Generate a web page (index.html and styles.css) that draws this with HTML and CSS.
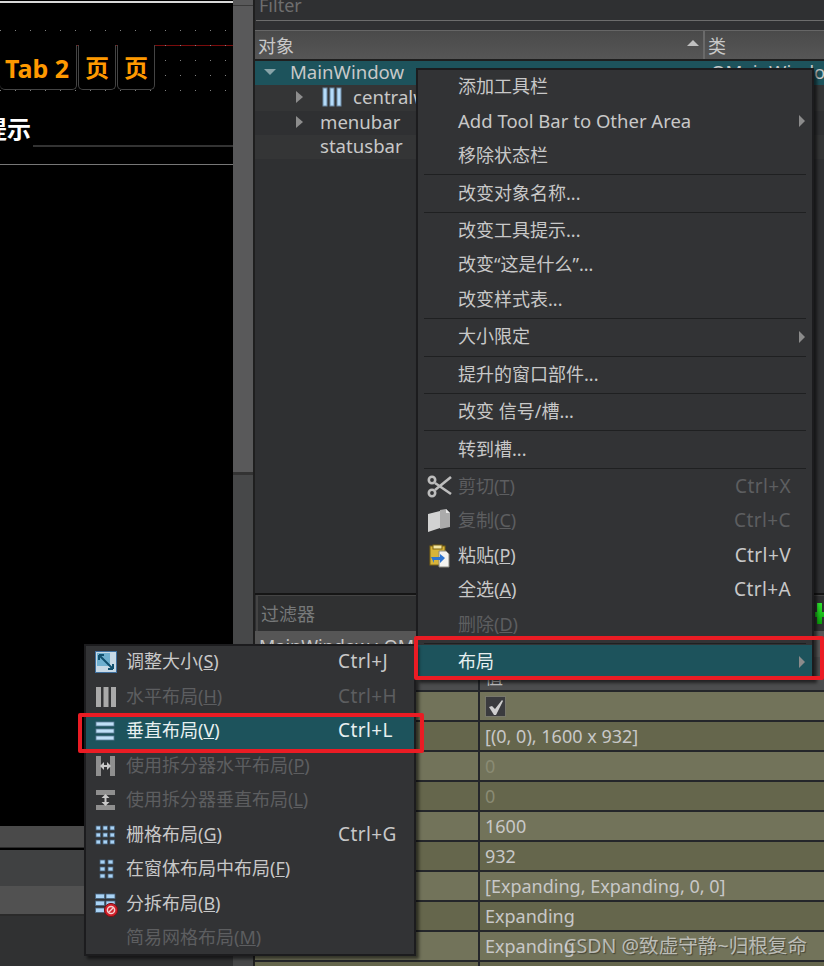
FILE: index.html
```html
<!DOCTYPE html>
<html lang="zh-CN">
<head>
    <meta charset="utf-8">
    <title>Qt Designer</title>
    <link rel="stylesheet" href="styles.css">
</head>
<body>
<div class="app">
    <!-- form being edited -->
    <div class="form">
        <div class="form-top"></div>
        <div class="tabs">
            <div class="tab tab-wide">Tab 2</div>
            <div class="tab">页</div>
            <div class="tab">页</div>
        </div>
        <div class="hint">提示</div>
        <div class="hint-line"></div>
        <div class="canvas"></div>
        <div class="band band-a"></div>
        <div class="band band-b"></div>
        <div class="band band-c"></div>
        <div class="band band-d"></div>
    </div>

    <div class="splitter">
        <div class="splitter-cap"></div>
        <div class="splitter-handle"></div>
    </div>

    <div class="side">
        <div class="filter-top">Filter</div>
        <div class="tree-head">
            <div class="head-cell head-obj">对象<span class="sort-up"></span></div>
            <div class="head-cell">类</div>
        </div>
        <div class="tree">
            <div class="tree-row selected"><span class="arrow-down"></span><span class="name name-main">MainWindow</span><span class="cls">QMainWindow</span></div>
            <div class="tree-row tall alt">
                <span class="arrow-right"></span>
                <svg class="tree-icon" width="20" height="20" viewBox="0 0 20 20"><rect x="1" y="1" width="4" height="18" fill="#b5dcfa" stroke="#6d8ba6"/><rect x="8" y="1" width="4" height="18" fill="#b5dcfa" stroke="#6d8ba6"/><rect x="15" y="1" width="4" height="18" fill="#b5dcfa" stroke="#6d8ba6"/></svg>
                <span class="name">centralwidget</span>
            </div>
            <div class="tree-row"><span class="arrow-right"></span><span class="name name-sub">menubar</span></div>
            <div class="tree-row alt"><span class="name name-leaf">statusbar</span></div>
        </div>
        <div class="tree-space"></div>

        <div class="prop-filter">过滤器</div>
        <div class="prop-title">MainWindow : QMainWindow</div>
        <div class="prop-head"><div class="prop-key"></div><div class="prop-val">值</div></div>
        <div class="prop-row"><div class="prop-key"></div><div class="prop-val"><span class="check"><svg width="16" height="16" viewBox="0 0 16 16"><path d="M1 8l3-1 3 3 7-9 1 1-7 14h-2z" fill="#cfcfcf"/></svg></span></div></div>
        <div class="prop-row dark"><div class="prop-key"></div><div class="prop-val">[(0, 0), 1600 x 932]</div></div>
        <div class="prop-row"><div class="prop-key"></div><div class="prop-val off">0</div></div>
        <div class="prop-row dark"><div class="prop-key"></div><div class="prop-val off">0</div></div>
        <div class="prop-row"><div class="prop-key"></div><div class="prop-val">1600</div></div>
        <div class="prop-row dark"><div class="prop-key"></div><div class="prop-val">932</div></div>
        <div class="prop-row"><div class="prop-key"></div><div class="prop-val">[Expanding, Expanding, 0, 0]</div></div>
        <div class="prop-row dark"><div class="prop-key"></div><div class="prop-val">Expanding</div></div>
        <div class="prop-row"><div class="prop-key"></div><div class="prop-val">Expanding</div></div>
        <div class="prop-row dark"><div class="prop-key"></div><div class="prop-val"></div></div>
    </div>
</div>

<span class="plus"></span>

<!-- context menu on the object tree -->
<div class="menu menu-main">
    <div class="item"><span class="label">添加工具栏</span></div>
    <div class="item"><span class="label label-en">Add Tool Bar to Other Area</span><span class="sub"></span></div>
    <div class="item"><span class="label">移除状态栏</span></div>
    <div class="sep"></div>
    <div class="item"><span class="label">改变对象名称...</span></div>
    <div class="sep"></div>
    <div class="item"><span class="label">改变工具提示...</span></div>
    <div class="item"><span class="label">改变“这是什么”...</span></div>
    <div class="item"><span class="label">改变样式表...</span></div>
    <div class="sep"></div>
    <div class="item"><span class="label">大小限定</span><span class="sub"></span></div>
    <div class="sep"></div>
    <div class="item"><span class="label">提升的窗口部件...</span></div>
    <div class="sep"></div>
    <div class="item"><span class="label">改变 信号/槽...</span></div>
    <div class="sep"></div>
    <div class="item"><span class="label">转到槽...</span></div>
    <div class="sep"></div>
    <div class="item off">
        <svg class="icon" width="26" height="24" viewBox="0 0 26 24"><g fill="none" stroke="#bdbdbd" stroke-width="2.6"><path d="M8 8L24 19"/><path d="M8 15L24 2"/><circle cx="5" cy="5" r="3.2"/><circle cx="5" cy="18" r="3.2"/></g></svg>
        <span class="label">剪切(<u>T</u>)</span><span class="keys">Ctrl+X</span>
    </div>
    <div class="item off">
        <svg class="icon" width="26" height="24" viewBox="0 0 26 24"><path d="M1 5l12-3v17L1 23z" fill="#d2d2d2"/><path d="M13 1l6-1 4 4v14l-10 2z" fill="#ababab"/><path d="M19 0v4h4z" fill="#e6e6e6"/></svg>
        <span class="label">复制(<u>C</u>)</span><span class="keys">Ctrl+C</span>
    </div>
    <div class="item">
        <svg class="icon" width="26" height="24" viewBox="0 0 26 24"><rect x="3" y="2" width="15" height="19" fill="#d9b53a" stroke="#7d6414"/><rect x="6" y="1" width="9" height="4" fill="#f3e6a4" stroke="#7d6414"/><path d="M12 7h7l3 3v13H12z" fill="#f4f4f0" stroke="#8a8a80"/><path d="M4 13h9v-3l5 4-5 5v-3H7v3z" fill="#2f76d2"/></svg>
        <span class="label">粘贴(<u>P</u>)</span><span class="keys">Ctrl+V</span>
    </div>
    <div class="item"><span class="label">全选(<u>A</u>)</span><span class="keys">Ctrl+A</span></div>
    <div class="item off"><span class="label">删除(<u>D</u>)</span></div>
    <div class="sep"></div>
    <div class="item active"><span class="label">布局</span><span class="sub"></span></div>
</div>

<!-- layout submenu -->
<div class="menu menu-layout">
    <div class="item">
        <svg class="icon" width="22" height="22" viewBox="0 0 22 22"><rect x="0.5" y="0.5" width="21" height="21" fill="#c7d9e6" stroke="#3f6f9e"/><rect x="2" y="2" width="13" height="13" fill="#6fb0d0"/><path d="M4 4l14 14M4 4v5M4 4h5M18 18v-5M18 18h-5" fill="none" stroke="#12506e" stroke-width="2"/></svg>
        <span class="label">调整大小(<u>S</u>)</span><span class="keys">Ctrl+J</span>
    </div>
    <div class="item off">
        <svg class="icon" width="22" height="22" viewBox="0 0 22 22"><rect x="1" y="1" width="5" height="20" fill="#a9a9a9"/><rect x="8.5" y="1" width="5" height="20" fill="#a9a9a9"/><rect x="16" y="1" width="5" height="20" fill="#a9a9a9"/></svg>
        <span class="label">水平布局(<u>H</u>)</span><span class="keys">Ctrl+H</span>
    </div>
    <div class="item active">
        <svg class="icon" width="22" height="22" viewBox="0 0 22 22"><rect x="1" y="2" width="18" height="4" fill="#bfe0f7" stroke="#5e7d99" stroke-width="0.8"/><rect x="1" y="9" width="18" height="4" fill="#bfe0f7" stroke="#5e7d99" stroke-width="0.8"/><rect x="1" y="16" width="18" height="4" fill="#bfe0f7" stroke="#5e7d99" stroke-width="0.8"/></svg>
        <span class="label">垂直布局(<u>V</u>)</span><span class="keys">Ctrl+L</span>
    </div>
    <div class="item off">
        <svg class="icon" width="22" height="22" viewBox="0 0 22 22"><rect x="1" y="1" width="5" height="20" fill="#8f8f8f"/><rect x="15" y="1" width="5" height="20" fill="#8f8f8f"/><path d="M5 11l4-4v3h3V7l4 4-4 4v-3H9v3z" fill="#c9c9c9"/></svg>
        <span class="label">使用拆分器水平布局(<u>P</u>)</span>
    </div>
    <div class="item off">
        <svg class="icon" width="22" height="22" viewBox="0 0 22 22"><rect x="1" y="1" width="19" height="5" fill="#8f8f8f"/><rect x="1" y="16" width="19" height="5" fill="#8f8f8f"/><path d="M10.5 5l4 4h-3v4h3l-4 4-4-4h3V9h-3z" fill="#c9c9c9"/></svg>
        <span class="label">使用拆分器垂直布局(<u>L</u>)</span>
    </div>
    <div class="item">
        <svg class="icon" width="22" height="22" viewBox="0 0 22 22" fill="#a9d3f5" stroke="#47627c" stroke-width="0.8"><rect x="1" y="2" width="4.5" height="4"/><rect x="8" y="2" width="4.5" height="4"/><rect x="15" y="2" width="4.5" height="4"/><rect x="1" y="9" width="4.5" height="4"/><rect x="8" y="9" width="4.5" height="4"/><rect x="15" y="9" width="4.5" height="4"/><rect x="1" y="16" width="4.5" height="4"/><rect x="8" y="16" width="4.5" height="4"/><rect x="15" y="16" width="4.5" height="4"/></svg>
        <span class="label">栅格布局(<u>G</u>)</span><span class="keys">Ctrl+G</span>
    </div>
    <div class="item">
        <svg class="icon" width="22" height="22" viewBox="0 0 22 22" fill="#a9d3f5" stroke="#47627c" stroke-width="0.8"><rect x="5" y="2" width="5" height="4"/><rect x="13" y="2" width="5" height="4"/><rect x="5" y="9" width="5" height="4"/><rect x="13" y="9" width="5" height="4"/><rect x="5" y="16" width="5" height="4"/><rect x="13" y="16" width="5" height="4"/></svg>
        <span class="label">在窗体布局中布局(<u>F</u>)</span>
    </div>
    <div class="item">
        <svg class="icon" width="24" height="24" viewBox="0 0 24 24"><g fill="#a9d3f5" stroke="#47627c" stroke-width="0.8"><rect x="0.5" y="1" width="9" height="4.5"/><rect x="11" y="1" width="9" height="4.5"/><rect x="0.5" y="8" width="9" height="4.5"/><rect x="11" y="8" width="9" height="4.5"/><rect x="0.5" y="15" width="9" height="4.5"/></g><circle cx="16" cy="17" r="6.6" fill="#d0202a" stroke="#7a1016"/><circle cx="16" cy="17" r="3.6" fill="none" stroke="#f3d0d0" stroke-width="1.5"/><path d="M13.5 19.5l5-5" stroke="#f3d0d0" stroke-width="1.5"/></svg>
        <span class="label">分拆布局(<u>B</u>)</span>
    </div>
    <div class="item off"><span class="label">简易网格布局(<u>M</u>)</span></div>
</div>

<div class="red-box red-main"></div>
<div class="red-box red-layout"></div>
<div class="mark">CSDN @致虚守静~归根复命</div>
</body>
</html>
```

FILE: styles.css
```css
html, body {
    margin: 0;
    padding: 0;
}

body {
    width: 824px;
    height: 966px;
    overflow: hidden;
    position: relative;
    background: #2f3032;
    font-family: "Noto Sans", "Noto Sans CJK SC", sans-serif;
    font-size: 18px;
    color: #c8c8c8;
}

.app {
    display: flex;
    height: 966px;
}

/* left: the form */
.form {
    width: 233px;
    flex: none;
    overflow: hidden;
    background: #000;
}

.form-top {
    height: 45px;
    box-sizing: border-box;
    border-top: 2px solid #d8d8d8;
    margin-top: 1px;
    margin-bottom: -1px;
    border-bottom: 1px solid #7a0c0c;
    background-image: radial-gradient(circle at 0.5px 0.5px, #808080 0.7px, transparent 0.8px);
    background-size: 15px 15px;
    background-position: 0 27px;
    background-repeat: repeat-x;
}

.tabs {
    display: flex;
    height: 46px;
    background-image: radial-gradient(circle at 0.5px 0.5px, #808080 0.7px, transparent 0.8px);
    background-size: 15px 15px;
}

.tab {
    width: 38px;
    height: 45px;
    box-sizing: border-box;
    margin-right: 1px;
    background: #000;
    border: 1px solid #444;
    border-top: 0;
    border-radius: 0 0 5px 5px;
    color: #ff9900;
    font-weight: bold;
    font-size: 24px;
    line-height: 46px;
    text-align: center;
}

.tab-wide {
    width: 77px;
    padding-right: 2px;
    border-left: 0;
    font-size: 25px;
}

.hint {
    height: 30px;
    margin: 24px 0 0 -17px;
    color: #fff;
    font-weight: bold;
    font-size: 24px;
    line-height: 28px;
}

.hint-line {
    height: 17px;
    margin-left: 33px;
    border-top: 2px solid #333;
}

.canvas {
    height: 661px;
    border-top: 1px solid #777;
}

.band {
    background: #454545;
}

.band-a {
    height: 21px;
    background: #4a4a4a;
    border-bottom: 1px solid #2a2a2a;
}

.band-b {
    height: 36px;
    background: #404142;
    border-top: 2px solid #000;
}

.band-c {
    height: 28px;
    background: #515151;
}

.band-d {
    height: 52px;
    background: #303132;
    border-top: 2px solid #2a2a2a;
}

/* splitter */
.splitter {
    width: 20px;
    flex: none;
    background: #474849;
    border-right: 2px solid #1f1f1f;
}

.splitter-cap {
    height: 5px;
    background: #59595a;
    border-bottom: 1px solid #3a3a3a;
}

.splitter-handle {
    height: 466px;
    background: #59595a;
    border-bottom: 3px solid #333;
}

/* right side */
.side {
    flex: 1;
    min-width: 0;
    background: #2f3032;
}

.filter-top {
    height: 20px;
    margin-left: 1px;
    padding-left: 3px;
    border-bottom: 1px solid #6c6c6c;
    color: #6e6e6e;
    line-height: 10px;
    overflow: hidden;
}

.tree-head {
    display: flex;
    height: 28px;
    margin-top: 9px;
    border-top: 1px solid #666;
    border-bottom: 2px solid #1f1f1f;
    background: linear-gradient(#4a4a4a, #565656);
}

.head-cell {
    padding-left: 3px;
    line-height: 30px;
    flex: 1;
    position: relative;
}

.head-obj {
    flex: none;
    width: 445px;
    border-right: 2px solid #6a6a6a;
}

.sort-up {
    position: absolute;
    right: 4px;
    top: 9px;
    border: 6px solid transparent;
    border-top: 0;
    border-bottom: 6px solid #c0c0c0;
}

.tree-row {
    height: 24px;
    box-sizing: border-box;
    padding-bottom: 2px;
    display: flex;
    align-items: center;
    white-space: nowrap;
    position: relative;
    line-height: 24px;
    font-size: 18.6px;
}

.tree-row.tall {
    height: 26px;
}

.tree-row.selected {
    background: #1d535c;
}

.tree-row.alt {
    background: #343536;
}

.arrow-down {
    margin-left: 9px;
    border: 6px solid transparent;
    border-bottom: 0;
    border-top: 6px solid #87a3a8;
}

.arrow-right {
    margin-left: 41px;
    border: 6px solid transparent;
    border-right: 0;
    border-left: 7px solid #8d8d8d;
}

.tree-icon {
    margin-left: 19px;
}

.tree-row .name {
    margin-left: 11px;
}

.tree-row .name-main {
    margin-left: 14px;
}

.tree-row .name-sub {
    margin-left: 17px;
}

.tree-row .name-leaf {
    margin-left: 65px;
}

.cls {
    position: absolute;
    left: 456px;
}

.tree-space {
    height: 434px;
    border-bottom: 2px solid #151515;
}

.prop-filter {
    height: 35px;
    margin-left: 1px;
    padding-left: 3px;
    line-height: 36px;
    color: #77797a;
    background: #303132;
    border-top: 1px solid #444;
    border-left: 2px solid #444;
}

.prop-title {
    height: 26px;
    background: #565656;
    line-height: 30px;
    padding-left: 4px;
    white-space: nowrap;
    overflow: hidden;
}

.prop-head {
    display: flex;
    height: 33px;
    background: #4c4d4e;
    line-height: 40px;
}

.prop-row {
    display: flex;
    height: 28px;
    background: #72735a;
    border-top: 2px solid #24262a;
    line-height: 28px;
}

.prop-row.dark {
    background: #65664c;
}

.prop-key {
    width: 223px;
    flex: none;
    border-right: 2px solid #24262a;
}

.prop-val {
    padding-left: 5px;
    white-space: nowrap;
}

.prop-val.off {
    color: #8a8b74;
}

.check {
    display: flex;
    align-items: center;
    justify-content: center;
    width: 21px;
    height: 21px;
    margin-top: 4px;
    background: #3a3b3e;
    border: 1px solid #77776a;
    box-sizing: border-box;
}

.plus {
    position: absolute;
    left: 815px;
    top: 603px;
    width: 9px;
    height: 21px;
    background: linear-gradient(#2ee32e, #0a9c0a);
    clip-path: polygon(2px 0, 7px 0, 7px 9px, 9px 9px, 9px 14px, 7px 14px, 7px 21px, 2px 21px, 2px 14px, 0 14px, 0 9px, 2px 9px);
}

/* popup menus */
.menu {
    position: absolute;
    box-sizing: border-box;
    background: #323335;
    border: 2px solid #1c1c1e;
    box-shadow: 3px 3px 3px rgba(0, 0, 0, 0.55);
}

.menu-main {
    left: 416px;
    top: 68px;
    width: 398px;
    height: 612px;
}

.menu-layout {
    left: 84px;
    top: 644px;
    width: 332px;
    height: 312px;
}

.item {
    height: 34.45px;
    box-sizing: border-box;
    padding-bottom: 2px;
    display: flex;
    align-items: center;
    position: relative;
    white-space: nowrap;
    line-height: 24px;
}

.menu-layout .item {
    height: 34.5px;
    padding-bottom: 4px;
}

.item.off {
    color: #5d5e60;
}

.item.active {
    background: #1d535c;
    color: #e8f0f0;
}

.label {
    margin-left: 40px;
}

.label-en {
    font-size: 18.5px;
}

.icon {
    position: absolute;
    left: 9px;
    top: 5px;
}

.keys {
    position: absolute;
    right: 21px;
    font-size: 19px;
    letter-spacing: 0.4px;
}

.menu-layout .keys {
    left: 252px;
    right: auto;
}

.sub {
    position: absolute;
    right: 7px;
    top: 11px;
    border: 6px solid transparent;
    border-right: 0;
    border-left: 6px solid #8b8b8b;
}

.sep {
    height: 1px;
    margin: 1px 6px 1px 6px;
    background: #1f2021;
}

.red-box {
    position: absolute;
    box-sizing: border-box;
    border: 4px solid #ea1c24;
    border-radius: 2px;
}

.red-main {
    left: 414px;
    top: 636px;
    width: 410px;
    height: 44px;
}

.red-layout {
    left: 78px;
    top: 713px;
    width: 346px;
    height: 40px;
}

.mark {
    position: absolute;
    left: 564px;
    top: 933px;
    color: rgba(225, 225, 225, 0.72);
    text-shadow: 1px 1px 1px rgba(0, 0, 0, 0.4);
    font-size: 19.6px;
    line-height: 26px;
    white-space: nowrap;
}
```
